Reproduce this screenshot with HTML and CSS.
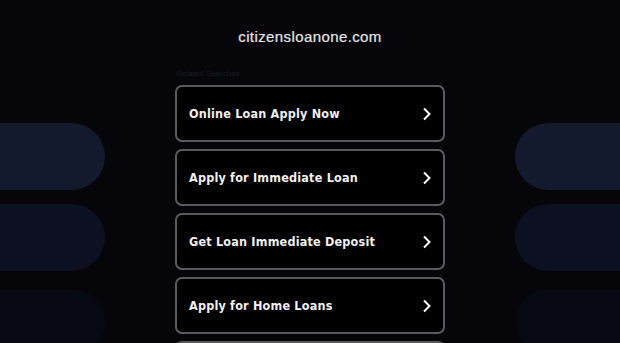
FILE: index.html
```html
<!DOCTYPE html>
<html lang="en">

<head>
    <meta charset="UTF-8">
    <meta name="viewport" content="width=device-width, initial-scale=1.0">
    <title>citizensloanone.com</title>
    <link rel="stylesheet" href="styles.css">
</head>

<body>
    <div class="page">
        <div class="side side-left">
            <div class="pill p1"></div>
            <div class="pill p2"></div>
            <div class="pill p3"></div>
        </div>

        <div class="main">
            <h1 class="domain">citizensloanone.com</h1>
            <p class="related">Related Searches</p>
            <div class="links">
                <a class="link" href="#"><span>Online Loan Apply Now</span>
                    <svg width="10" height="14" viewBox="0 0 10 14"><path d="M2 1.5 L7.5 7 L2 12.5" /></svg></a>
                <a class="link" href="#"><span>Apply for Immediate Loan</span>
                    <svg width="10" height="14" viewBox="0 0 10 14"><path d="M2 1.5 L7.5 7 L2 12.5" /></svg></a>
                <a class="link" href="#"><span>Get Loan Immediate Deposit</span>
                    <svg width="10" height="14" viewBox="0 0 10 14"><path d="M2 1.5 L7.5 7 L2 12.5" /></svg></a>
                <a class="link" href="#"><span>Apply for Home Loans</span>
                    <svg width="10" height="14" viewBox="0 0 10 14"><path d="M2 1.5 L7.5 7 L2 12.5" /></svg></a>
                <a class="link" href="#"></a>
            </div>
        </div>

        <div class="side side-right">
            <div class="pill p1"></div>
            <div class="pill p2"></div>
            <div class="pill p3"></div>
        </div>
    </div>
</body>

</html>
```

FILE: styles.css
```css
* {
    margin: 0;
    padding: 0;
    box-sizing: border-box;
}

html,
body {
    background: #05050a;
    height: 100%;
    overflow: hidden;
}

.page {
    display: grid;
    grid-template-columns: 105px 1fr 105px;
    height: 343px;
}

.side {
    display: flex;
    flex-direction: column;
    padding-top: 123px;
}

.pill {
    height: 67px;
    flex-shrink: 0;
}

.pill.p1 {
    background: #141a2e;
}

.pill.p2 {
    background: #0c1020;
    margin-top: 14px;
}

.pill.p3 {
    background: #070912;
    margin-top: 18px;
}

.side-left .pill {
    border-radius: 0 34px 34px 0;
}

.side-right .pill {
    border-radius: 34px 0 0 34px;
}

.main {
    display: flex;
    flex-direction: column;
    align-items: center;
    padding-top: 28px;
}

.domain {
    font-family: "Liberation Sans", Arial, sans-serif;
    font-size: 15px;
    font-weight: 500;
    letter-spacing: 0.4px;
    color: #e6e6e6;
    line-height: 18px;
    -webkit-text-stroke: 0.2px #e6e6e6;
}

.related {
    width: 270px;
    margin-top: 23px;
    font-family: "Liberation Sans", Arial, sans-serif;
    font-size: 8px;
    color: #1c1c26;
    line-height: 10px;
    padding-left: 1px;
}

.links {
    display: flex;
    flex-direction: column;
    gap: 7px;
    margin-top: 6px;
}

.link {
    display: flex;
    align-items: center;
    justify-content: space-between;
    width: 270px;
    height: 57px;
    flex-shrink: 0;
    background: #000;
    border: 2px solid #5a5a5e;
    border-radius: 7px;
    padding: 0 11px 0 12px;
    text-decoration: none;
    color: #f0f0f0;
    font-family: "DejaVu Sans Condensed", "DejaVu Sans", Verdana, sans-serif;
    font-size: 12.5px;
    font-weight: bold;
    letter-spacing: 0.2px;
}

.link svg path {
    fill: none;
    stroke: #ffffff;
    stroke-width: 2;
}
```
